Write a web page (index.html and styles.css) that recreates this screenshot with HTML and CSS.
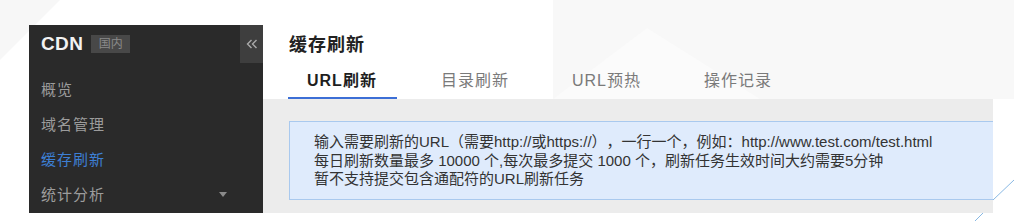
FILE: index.html
```html
<!DOCTYPE html>
<html lang="zh-CN">
<head>
<meta charset="utf-8">
<title>CDN 缓存刷新</title>
<link rel="stylesheet" href="styles.css">
</head>
<body>
<svg class="backdrop" width="1014" height="221" viewBox="0 0 1014 221" aria-hidden="true">
  <polygon points="553,0 1014,0 1014,99 553,99" fill="#f8f8f8"/>
  <polygon points="553,99 647,28 760,99" fill="#fbfbfb"/>
  <polygon points="0,0 60,0 0,60" fill="#f7f7f7"/>
  <line x1="993" y1="200" x2="1014" y2="180" stroke="#6aa6dc" stroke-width="0.8"/>
  <line x1="975" y1="221" x2="984" y2="212" stroke="#6aa6dc" stroke-width="0.8"/>
</svg>
<div class="page">
  <aside class="sidebar">
    <div class="side-head">
      <div class="brand">
        <span class="brand-name">CDN</span>
        <span class="badge">国内</span>
      </div>
      <button class="collapse" type="button" aria-label="收起">
        <svg width="12" height="10" viewBox="0 0 12 10"><path d="M5.5 1 L1.5 5 L5.5 9 M10.5 1 L6.5 5 L10.5 9" fill="none" stroke="#aaa" stroke-width="1.4"/></svg>
      </button>
    </div>
    <ul class="menu">
      <li class="menu-item">概览</li>
      <li class="menu-item">域名管理</li>
      <li class="menu-item active">缓存刷新</li>
      <li class="menu-item has-sub">统计分析<span class="caret"></span></li>
    </ul>
  </aside>
  <main class="main">
    <header class="main-head">
      <h1 class="title">缓存刷新</h1>
      <nav class="tabs">
        <span class="tab active">URL刷新</span>
        <span class="tab">目录刷新</span>
        <span class="tab">URL预热</span>
        <span class="tab">操作记录</span>
      </nav>
    </header>
    <section class="panel">
      <div class="notice">
        <p>输入需要刷新的URL（需要http://或https://），一行一个，例如：http://www.test.com/test.html</p>
        <p>每日刷新数量最多 10000 个,每次最多提交 1000 个，刷新任务生效时间大约需要5分钟</p>
        <p>暂不支持提交包含通配符的URL刷新任务</p>
      </div>
    </section>
  </main>
</div>
</body>
</html>
```
FILE: styles.css
```css
* { box-sizing: border-box; }
html, body { margin: 0; padding: 0; }
body {
  width: 1014px;
  height: 221px;
  background: #ffffff;
  font-family: "Liberation Sans", "Noto Sans CJK SC", sans-serif;
  position: relative;
  overflow: hidden;
}
.backdrop {
  position: absolute;
  left: 0;
  top: 0;
  z-index: 0;
}
.page {
  position: relative;
  z-index: 1;
  display: flex;
  padding: 25px 0 0 29px;
}
.sidebar {
  width: 234px;
  height: 188px;
  background: #2a2a2a;
  color: #9a9a9a;
}
.side-head {
  height: 38px;
  display: flex;
  justify-content: space-between;
}
.brand {
  display: flex;
  align-items: center;
  gap: 8px;
  padding-left: 12px;
}
.brand-name {
  color: #f2f2f2;
  font-weight: bold;
  font-size: 19px;
  letter-spacing: 0.4px;
}
.badge {
  background: #484848;
  color: #8a8a8a;
  font-size: 12px;
  height: 18px;
  line-height: 18px;
  padding: 0 4px;
  width: 39px;
  text-align: center;
}
.collapse {
  width: 23px;
  height: 38px;
  border: 0;
  padding: 0;
  background: #3e3e3e;
  display: flex;
  align-items: center;
  justify-content: center;
}
.menu {
  list-style: none;
  margin: 0;
  padding: 9px 0 0 12px;
}
.menu-item {
  height: 35px;
  line-height: 35px;
  font-size: 15px;
  color: #9c9c9c;
  letter-spacing: 1px;
  display: flex;
  align-items: center;
}
.menu-item.active { color: #3d7fd4; }
.has-sub { justify-content: space-between; padding-right: 36px; }
.caret {
  width: 0;
  height: 0;
  border-left: 4.5px solid transparent;
  border-right: 4.5px solid transparent;
  border-top: 5px solid #8a8a8a;
}
.main {
  width: 730px;
  height: 188px;
  display: flex;
  flex-direction: column;
}
.main-head {
  height: 74px;
  padding: 10px 0 0 26px;
}
.title {
  margin: 0;
  font-size: 18px;
  font-weight: bold;
  color: #222;
  line-height: 20px;
  letter-spacing: 1px;
}
.tabs {
  display: flex;
  gap: 25px;
  margin-top: 14px;
  margin-left: -1px;
}
.tab {
  padding: 0 19px;
  height: 30px;
  line-height: 24px;
  font-size: 16px;
  letter-spacing: 1px;
  color: #7a7a7a;
  border-bottom: 2px solid transparent;
}
.tab.active {
  color: #1e1e1e;
  font-weight: bold;
  border-bottom-color: #3c6fd6;
  padding-right: 20px;
}
.panel {
  flex: 1;
  background: #ececec;
  padding: 22px 0 13px 26px;
}
.notice {
  height: 79px;
  background: #dfebfc;
  border: 1px solid #a9c9ee;
  border-right: 0;
  padding: 11px 10px 0 24px;
  font-size: 15px;
  line-height: 18.5px;
  color: #333;
  text-spacing-trim: space-all;
}
.notice p { margin: 0; white-space: nowrap; }
```
